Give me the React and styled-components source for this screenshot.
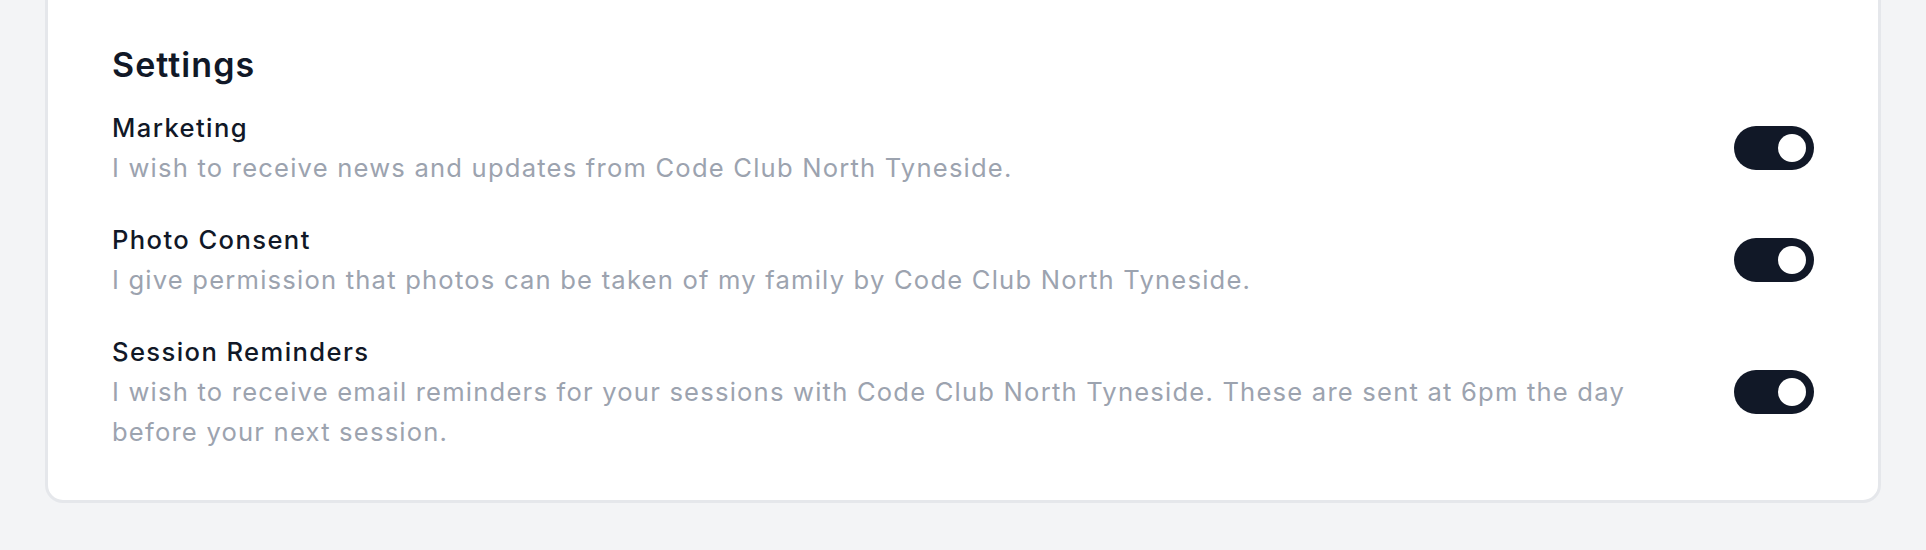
import React, { useState } from "react";
import styled, { createGlobalStyle } from "styled-components";

const GlobalStyle = createGlobalStyle`
  html, body {
    margin: 0;
    padding: 0;
    background: #f3f4f6;
    font-family: Inter, "Noto Sans", "Liberation Sans", sans-serif;
    -webkit-font-smoothing: antialiased;
  }
  * { box-sizing: border-box; }
`;

const Page = styled.main`
  padding: 0 45px 47px;
  background: #f3f4f6;
  min-height: 550px;
`;

const Card = styled.section`
  margin-top: -23px;
  background: #ffffff;
  border: 3px solid #e5e7eb;
  border-radius: 18px;
  padding: 64px 64px 48px;
`;

const Title = styled.h2`
  margin: 0 0 23px;
  font-size: 34px;
  line-height: 41px;
  font-weight: 600;
  color: #111827;
  letter-spacing: 1.05px;
`;

const List = styled.div`
  display: flex;
  flex-direction: column;
  gap: 32px;
`;

const Row = styled.div`
  display: flex;
  align-items: center;
  justify-content: space-between;
  gap: 64px;
`;

const Text = styled.div`
  flex: 1;
  min-width: 0;
`;

const Label = styled.div`
  font-size: 25.6px;
  line-height: 40px;
  font-weight: 500;
  color: #111827;
  letter-spacing: 1.4px;
`;

const Description = styled.p`
  margin: 0;
  font-size: 25.6px;
  line-height: 40px;
  font-weight: 400;
  color: #9ca3af;
  letter-spacing: 1.2px;
`;

const Switch = styled.button`
  flex: none;
  width: 80px;
  height: 44px;
  padding: 8px;
  border: none;
  border-radius: 22px;
  background: ${(p) => (p.$on ? "#111827" : "#e5e7eb")};
  display: flex;
  justify-content: ${(p) => (p.$on ? "flex-end" : "flex-start")};
  align-items: center;
  cursor: pointer;
`;

const Knob = styled.span`
  width: 28px;
  height: 28px;
  border-radius: 50%;
  background: #ffffff;
`;

const settings = [
  {
    id: "marketing",
    label: "Marketing",
    text: "I wish to receive news and updates from Code Club North Tyneside.",
  },
  {
    id: "photo",
    label: "Photo Consent",
    text: "I give permission that photos can be taken of my family by Code Club North Tyneside.",
  },
  {
    id: "reminders",
    label: "Session Reminders",
    text: "I wish to receive email reminders for your sessions with Code Club North Tyneside. These are sent at 6pm the day before your next session.",
  },
];

export default function App() {
  const [values, setValues] = useState({ marketing: true, photo: true, reminders: true });
  return (
    <>
      <GlobalStyle />
      <Page>
        <Card>
          <Title>Settings</Title>
          <List>
            {settings.map((s) => (
              <Row key={s.id}>
                <Text>
                  <Label>{s.label}</Label>
                  <Description>{s.text}</Description>
                </Text>
                <Switch
                  type="button"
                  role="switch"
                  aria-checked={values[s.id]}
                  $on={values[s.id]}
                  onClick={() => setValues((v) => ({ ...v, [s.id]: !v[s.id] }))}
                >
                  <Knob />
                </Switch>
              </Row>
            ))}
          </List>
        </Card>
      </Page>
    </>
  );
}
